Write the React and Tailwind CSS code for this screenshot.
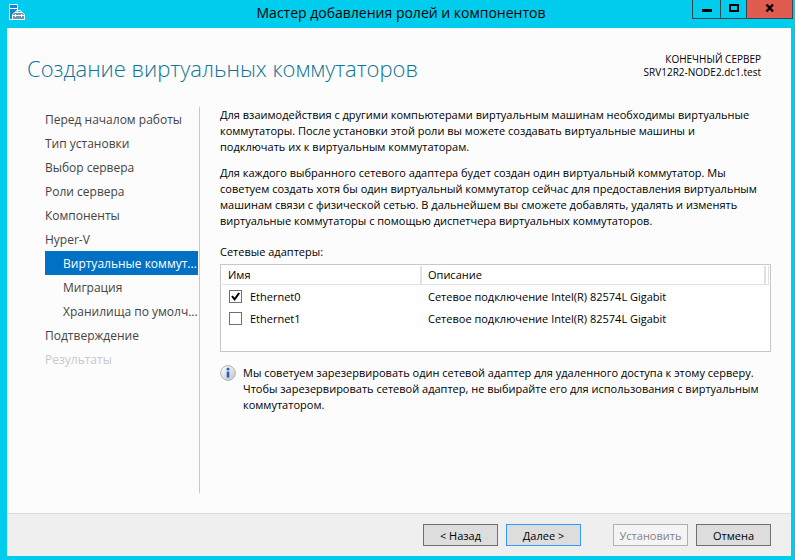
import { useState } from "react";

const steps = [
  { label: "Перед началом работы" },
  { label: "Тип установки" },
  { label: "Выбор сервера" },
  { label: "Роли сервера" },
  { label: "Компоненты" },
  { label: "Hyper-V" },
  { label: "Виртуальные коммут...", nested: true },
  { label: "Миграция", nested: true },
  { label: "Хранилища по умолч...", nested: true },
  { label: "Подтверждение" },
  { label: "Результаты", disabled: true },
];

const adapters = [
  { name: "Ethernet0", description: "Сетевое подключение Intel(R) 82574L Gigabit" },
  { name: "Ethernet1", description: "Сетевое подключение Intel(R) 82574L Gigabit" },
];

function ServerIcon() {
  return (
    <svg width="16" height="16" viewBox="0 0 16 16" aria-hidden="true">
      <path d="M.5.5h8v15h-8z" fill="#1583d8" stroke="#fff" />
      <path d="M1 4.5h7" stroke="#fff" />
      <path d="M3.5 15.5v-5l2-2h8l2 2v5z" fill="#6a96ae" stroke="#fff" />
      <path d="M6.5 8.5l1-2h4l1 2" fill="none" stroke="#fff" />
      <path d="M4 11.5h11M6.5 10v3M12.5 10v3" stroke="#fff" fill="none" />
    </svg>
  );
}

function InfoIcon() {
  return (
    <svg width="16" height="16" viewBox="0 0 16 16" className="shrink-0" aria-hidden="true">
      <defs>
        <linearGradient id="info-face" x1="0" y1="0" x2="1" y2="1">
          <stop offset="0" stopColor="#ffffff" />
          <stop offset="1" stopColor="#c4c4c4" />
        </linearGradient>
      </defs>
      <circle cx="8" cy="8" r="7.4" fill="url(#info-face)" stroke="#b5b5b5" />
      <circle cx="8" cy="4.2" r="1.4" fill="#1c5fc4" />
      <path d="M6.7 6.6h2.6v6H6.7z" fill="#1c5fc4" />
    </svg>
  );
}

function TitleBar() {
  return (
    <header className="-mr-[2px] flex h-7 items-start">
      <div className="w-[103px] pl-[2px] pt-1">
        <ServerIcon />
      </div>
      <h1 className="flex-1 whitespace-nowrap text-center text-[14px] leading-[26px] text-black">
        Мастер добавления ролей и компонентов
      </h1>
      <div className="flex h-[19px] border-x border-b border-[#33474c]">
        <button aria-label="Свернуть" className="flex w-[27px] items-center justify-center">
          <svg width="10" height="12" aria-hidden="true">
            <path d="M0 6h10v3H0z" />
          </svg>
        </button>
        <button
          aria-label="Развернуть"
          className="flex w-[26px] items-center justify-center border-l border-[#33474c]"
        >
          <svg width="10" height="12" aria-hidden="true">
            <path d="M1 2h8v6H1z" fill="none" stroke="#000" strokeWidth="2" />
          </svg>
        </button>
        <button
          aria-label="Закрыть"
          className="flex w-[46px] items-center justify-center border-l border-[#33474c] bg-[#e05b50]"
        >
          <svg width="10" height="12" aria-hidden="true">
            <path d="M1.5 1.5l6.5 7M8 1.5l-6.5 7" stroke="#000" strokeWidth="2.4" />
          </svg>
        </button>
      </div>
    </header>
  );
}

function Steps({ active, onSelect }) {
  return (
    <nav className="w-[155px] shrink-0 border-r border-[#c8c8c8] pr-px">
      <ul>
        {steps.map((step) => (
          <li key={step.label}>
            <button
              disabled={step.disabled}
              onClick={() => onSelect(step.label)}
              className={`block h-6 w-full whitespace-nowrap text-left text-[12px] leading-[26px] ${
                step.nested ? "pl-[18px]" : ""
              } ${
                step.label === active
                  ? "bg-[#0072c6] text-white"
                  : step.disabled
                    ? "text-[#c8c8c8]"
                    : "text-[#444444]"
              }`}
            >
              {step.label}
            </button>
          </li>
        ))}
      </ul>
    </nav>
  );
}

function AdapterTable() {
  const [checked, setChecked] = useState({ Ethernet0: true });

  const toggle = (name) => setChecked((prev) => ({ ...prev, [name]: !prev[name] }));

  return (
    <div className="min-h-[88px] border border-[#c8c8c8] bg-white p-px">
      <table aria-labelledby="adapters-label" className="w-full table-fixed border-collapse">
        <thead>
          <tr className="h-[18px] border-b border-[#e2e2e2] text-left">
            <th className="w-[199px] border-r-2 border-[#e2e2e2] pl-[6px] font-normal leading-[18px]">
              Имя
            </th>
            <th className="border-r-2 border-[#e2e2e2] pl-[6px] font-normal leading-[18px]">Описание</th>
            <td className="w-1 border-r border-[#e2e2e2]" />
          </tr>
        </thead>
        <tbody>
          {adapters.map(({ name, description }) => (
            <tr key={name} className="h-[22px]">
              <td className="pl-[7px] pt-[2px]">
                <label className="flex items-center gap-2">
                  <span className="relative flex">
                    <input
                      type="checkbox"
                      checked={!!checked[name]}
                      onChange={() => toggle(name)}
                      className="size-[13px] appearance-none border border-[#707070] bg-white"
                    />
                    {checked[name] && (
                      <svg
                        viewBox="0 0 13 13"
                        className="pointer-events-none absolute inset-0 size-[13px]"
                        aria-hidden="true"
                      >
                        <path d="M3 6l2.6 3.4L10.2 3" fill="none" stroke="#000" strokeWidth="2" />
                      </svg>
                    )}
                  </span>
                  {name}
                </label>
              </td>
              <td className="whitespace-nowrap pl-[7px] pt-[2px]" colSpan={2}>
                {description}
              </td>
            </tr>
          ))}
        </tbody>
      </table>
    </div>
  );
}

function Footer() {
  const base = "h-[22px] w-[75px] border text-center leading-[22px]";

  return (
    <footer className="flex justify-end gap-2 border-t border-[#d9d9d9] bg-[#efefef] pb-[10px] pr-5 pt-[10px]">
      <button className={`${base} border-[#707070] bg-[#dddddd]`}>&lt; Назад</button>
      <button className={`${base} border-[#3399ff] bg-[#dddddd]`}>Далее &gt;</button>
      <button disabled className={`${base} ml-6 border-[#adb2b5] bg-[#f4f4f4] text-[#838383]`}>
        Установить
      </button>
      <button className={`${base} border-[#707070] bg-[#dddddd]`}>Отмена</button>
    </footer>
  );
}

export default function App() {
  const [active, setActive] = useState("Виртуальные коммут...");

  return (
    <div className="flex min-h-screen flex-col bg-[#00cdee] pb-1 pl-[7px] pr-1 font-['Open_Sans','Noto_Sans',sans-serif] text-[11px] leading-4 text-black">
      <TitleBar />

      <div className="flex flex-1 flex-col bg-[#fcfcfc]">
        <div className="flex items-start justify-between pl-5 pr-[30px] pt-6">
          <h2 className="whitespace-nowrap text-[22px] font-light leading-8 text-[#0c7597]">
            Создание виртуальных коммутаторов
          </h2>
          <p className="whitespace-nowrap pt-px text-right text-[10px] leading-[13px]">
            КОНЕЧНЫЙ СЕРВЕР
            <br />
            SRV12R2-NODE2.dc1.test
          </p>
        </div>

        <div className="flex flex-1 pb-5 pl-[38px] pr-5 pt-[23px]">
          <Steps active={active} onSelect={setActive} />

          <main className="min-w-0 flex-1 whitespace-nowrap pl-5">
            <p>
              Для взаимодействия с другими компьютерами виртуальным машинам необходимы виртуальные
              <br />
              коммутаторы. После установки этой роли вы можете создавать виртуальные машины и
              <br />
              подключать их к виртуальным коммутаторам.
            </p>
            <p className="mt-[10px]">
              Для каждого выбранного сетевого адаптера будет создан один виртуальный коммутатор. Мы
              <br />
              советуем создать хотя бы один виртуальный коммутатор сейчас для предоставления виртуальным
              <br />
              машинам связи с физической сетью. В дальнейшем вы сможете добавлять, удалять и изменять
              <br />
              виртуальные коммутаторы с помощью диспетчера виртуальных коммутаторов.
            </p>
            <p id="adapters-label" className="mb-1 mt-[15px]">
              Сетевые адаптеры:
            </p>
            <AdapterTable />
            <div className="mt-[13px] flex gap-[7px]">
              <InfoIcon />
              <p>
                Мы советуем зарезервировать один сетевой адаптер для удаленного доступа к этому серверу.
                <br />
                Чтобы зарезервировать сетевой адаптер, не выбирайте его для использования с виртуальным
                <br />
                коммутатором.
              </p>
            </div>
          </main>
        </div>

        <Footer />
      </div>
    </div>
  );
}
